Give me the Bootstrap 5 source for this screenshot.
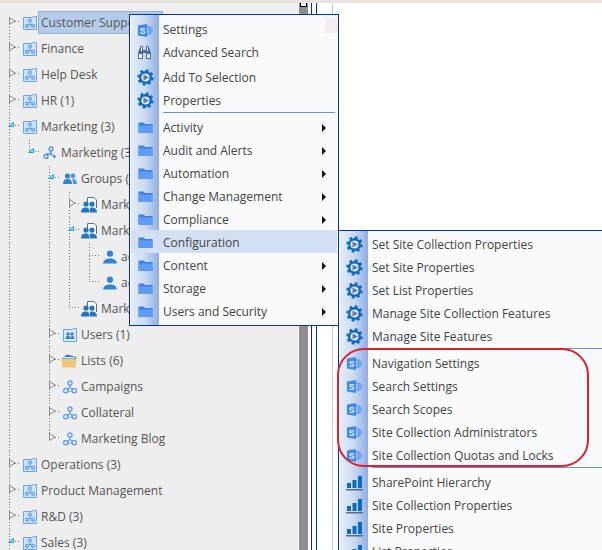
<!DOCTYPE html>
<html lang="en">
<head>
<meta charset="utf-8">
<title>Tree menu</title>
<link href="https://cdn.jsdelivr.net/npm/bootstrap@5.3.0/dist/css/bootstrap.min.css" rel="stylesheet">
<style>
html,body{height:550px;overflow:hidden;background:#fff}
body{font-family:"Open Sans","Noto Sans",sans-serif;font-size:12px;color:#555}
.topstrip{height:3px;background:#e6e2de}
.stage{height:547px;position:relative;overflow:hidden}
.treepane{width:298px;background:#eee;padding-top:7px;overflow:hidden;flex:none}
.scrollcol{width:11px;flex:none;background:#fff;padding-left:1px}
.scrollthumb{height:100%;background:#8f8f8f;width:9px}
.scrollknob{position:absolute;left:300px;top:-2px;width:7px;height:6px;background:#fff;border:1px solid #000}
.rail1{width:5px;flex:none;margin-left:2px;border-left:1px solid #003399;background:#fff}
.rail2{width:16px;flex:none;border-left:1px solid #003399;background:#fff}
.rail3{flex:1;border-left:1px solid #b7cbe8;background:#fff;margin-left:0}
.trow{height:26px;line-height:26px;white-space:nowrap}
.tg,.tc,.tl,.tb{display:block;width:20px;height:26px;flex:none;background-repeat:no-repeat}
.tg{background-image:repeating-linear-gradient(to bottom,#777 0 1px,transparent 1px 3px);background-size:1px 100%;background-position:9px 0}
.tc{background-image:repeating-linear-gradient(to bottom,#777 0 1px,transparent 1px 3px),repeating-linear-gradient(to right,#777 0 1px,transparent 1px 3px);background-size:1px 100%,11px 1px;background-position:9px 0,9px 11px}
.tl{background-image:repeating-linear-gradient(to bottom,#777 0 1px,transparent 1px 3px),repeating-linear-gradient(to right,#777 0 1px,transparent 1px 3px);background-size:1px 12px,11px 1px;background-position:9px 0,9px 11px}
.tc.tfirst{background-size:1px 15px,11px 1px;background-position:9px 11px,9px 11px}
.tc svg,.tl svg{display:block;margin-left:9px;margin-top:7px;width:7px;height:8px}
.tc svg.op,.tl svg.op{margin-left:8px;margin-top:8px;width:6px;height:5px}
.tico{width:14px;height:14px;margin-left:3px;margin-right:4px;flex:none}
.tico.wide{width:16px;height:16px;margin-left:1px}
.tsel{display:block;margin-left:-3px;width:125px;height:23px;line-height:21px;background:#b4cce9;border:1px solid #8fb0d8;padding-left:2px;margin-top:-1px}
.cmenu{position:absolute;border:1px solid #003399;padding:4px 1px 3px 1px;color:#444;background-color:#f8fafb;background-image:linear-gradient(90deg,#e4edf9 0,#c9daf3 14px,#8fade6 28px,transparent 28px);background-repeat:no-repeat;background-size:29px 100%;background-position:1px 0}
.cm1{left:129px;top:11px;width:210px}
.cm2{left:338px;top:227px;width:300px;padding-top:2px}
.mitem{height:23px;line-height:23px;white-space:nowrap}
.mitem.hot{background:#d3e0f3}
.mh22{height:22px;line-height:22px}
.mh25{height:25px;line-height:23px;padding-top:2px}
.cm1 .msep~.mitem{padding-top:2px}
.micon{width:28px;flex:none;text-align:center}
.micon svg{width:17px;height:17px;display:block}
.micon svg.bino{margin-left:5px}
.mtext{margin-left:4px;flex:1}
.marrow{width:0;height:0;border-left:4px solid #111;border-top:4px solid transparent;border-bottom:4px solid transparent;margin-right:11px}
.msep{height:1px;background:#6f94d8;margin:0 2px 2px 32px}
.cm2 .msep{margin-bottom:3px;margin-right:0}
.ghost{position:absolute;left:325px;top:15px;width:13px;height:15px;background:#f3ecf3}
.ring{position:absolute;left:337px;top:345px;width:252px;height:119px;border:2px solid #e01f2e;border-radius:27px}
</style>
</head>
<body>
<svg width="0" height="0" class="d-block" aria-hidden="true">
<defs>
<symbol id="i-site" viewBox="0 0 14 14"><path d="M.5 1.500H9L10.500 .5 13.500 .5V13.500H.5Z" fill="#cfe2fb" stroke="#69a4f2"/><circle cx="7" cy="4.500" r="1.600" fill="#a9c9f5" stroke="#5a98ea"/><circle cx="4" cy="9.800" r="1.600" fill="#a9c9f5" stroke="#5a98ea"/><circle cx="10" cy="9.800" r="1.600" fill="#a9c9f5" stroke="#5a98ea"/><path d="M7 6.500V8M5.500 8.500H8.500" stroke="#5a98ea"/></symbol>
<symbol id="i-sub" viewBox="0 0 14 14"><circle cx="8" cy="3" r="2" fill="none" stroke="#4a8fe8" stroke-width="1.300"/><path d="M8 5V8M8 8L12 11M8 8H3" stroke="#4a8fe8" stroke-width="1.300" fill="none"/><circle cx="3" cy="10.500" r="2" fill="none" stroke="#4a8fe8" stroke-width="1.300"/><path d="M10 9.500H13L11.500 13Z" fill="#2f86d6"/></symbol>
<symbol id="i-groups" viewBox="0 0 14 14"><circle cx="4.500" cy="4" r="2.600" fill="#2f86d6"/><circle cx="10" cy="4" r="2.400" fill="#4b98e4"/><path d="M0 12C0 8 2 7 4.500 7S9 8 9 12Z" fill="#2f86d6"/><path d="M9.500 7C12 7 14 8 14 12H10C10 10 10 8 9 7.500Z" fill="#4b98e4"/></symbol>
<symbol id="i-gdoc" viewBox="0 0 16 16"><path d="M6.500 5V.5H13L15.500 3V11" fill="#fff" stroke="#5a6f82"/><circle cx="5" cy="7" r="2.600" fill="#1f78c1"/><circle cx="11" cy="7" r="2.600" fill="#1f78c1"/><path d="M0 15.500C0 11.500 2 10.500 5 10.500S8 11.500 8 15.500Z" fill="#1f78c1"/><path d="M8.500 15.500C8.500 11.500 9 10.500 11 10.500S16 11.500 16 15.500Z" fill="#1f78c1"/></symbol>
<symbol id="i-user" viewBox="0 0 14 14"><circle cx="7" cy="3.700" r="3.100" fill="#2f86d6"/><path d="M0 13.500C.5 9.500 4 8.500 7 8.500S13.500 9.500 14 13.500Z" fill="#2f86d6"/></symbol>
<symbol id="i-users" viewBox="0 0 14 14"><path d="M.5 1.500H9L10.500 .5 13.500 .5V13.500H.5Z" fill="#dce9fb" stroke="#69a4f2"/><circle cx="5" cy="6" r="1.700" fill="#3a7fd4"/><circle cx="9" cy="6" r="1.700" fill="#3a7fd4"/><path d="M2.500 11C2.500 8.500 4 8 5 8S7.500 8.500 7.500 11ZM7.500 11C7.500 9 8 8 9 8S11.500 8.500 11.500 11Z" fill="#3a7fd4"/></symbol>
<symbol id="i-lists" viewBox="0 0 16 16"><path d="M1 5.500 6 1.500 15 4V6H1Z" fill="#2a7fc5"/><path d="M2 4H14V5.500H2Z" fill="#d6eafb"/><path d="M.5 6H15.500L14.500 14.500H1.500Z" fill="#f3c778"/></symbol>
<symbol id="i-hier" viewBox="0 0 14 14"><circle cx="7" cy="3" r="2.100" fill="#e2edfc" stroke="#5a98ea" stroke-width="1.200"/><rect x=".7" y="8.700" width="4" height="4" rx="1" fill="#e2edfc" stroke="#5a98ea" stroke-width="1.200"/><rect x="9.300" y="8.700" width="4" height="4" rx="1" fill="#e2edfc" stroke="#5a98ea" stroke-width="1.200"/><rect x="5.300" y="8" width="3.400" height="3.400" rx="1" fill="#e2edfc" stroke="#5a98ea"/><path d="M7 5V8" stroke="#5a98ea" stroke-width="1.200"/></symbol>
<symbol id="i-sp" viewBox="0 0 17 17"><circle cx="11" cy="8.500" r="3.800" fill="none" stroke="#6ea6f4" stroke-width="2"/><path d="M11 4.700 16 8.500 11 12.300Z" fill="#6ea6f4"/><path d="M1 3.500 10 2V15L1 13.500Z" fill="#3f88ee"/><text x="5.500" y="11.500" text-anchor="middle" font-family="Liberation Sans,sans-serif" font-size="8.500" font-weight="700" fill="#eaf2fe">S</text></symbol>
<symbol id="i-gear" viewBox="0 0 17 17"><circle cx="8.500" cy="8.500" r="7" fill="none" stroke="#0b6cbf" stroke-width="2.400" stroke-dasharray="2.750 2.750"/><circle cx="8.500" cy="8.500" r="5.300" fill="#dfe8f1" stroke="#0b6cbf" stroke-width="2.400"/><path d="M6.500 5.500 12 8.500 6.500 11.500Z" fill="#6d7d8a"/></symbol>
<symbol id="i-bino" viewBox="0 0 17 17"><path d="M4.500 2H7V6H10V2H12.500L15 9V15H10V9H7V15H2V9Z" fill="#4d6a9c"/><path d="M3 10H6V14H3ZM11 10H14V14H11ZM5 3H6V7H5ZM11 3H12V7H11Z" fill="#eef2fa"/></symbol>
<symbol id="i-folder" viewBox="0 0 17 17"><path d="M1.500 5V3.500H7L8 5H15.500V14H1.500Z" fill="#3f82e2"/><path d="M1.500 6.500H15.500V14H1.500Z" fill="#5d9df6"/></symbol>
<symbol id="i-bars" viewBox="0 0 17 17"><path d="M1 9H5V14H1ZM6.500 6H10.500V14H6.500ZM12 2H16V14H12Z" fill="#0b6cbf"/><path d="M0 15H17V16.500H0Z" fill="#5f6b74"/></symbol>
<symbol id="t-closed" viewBox="0 0 7 8"><path d="M.5.500 6 4 .5 7.500Z" fill="#eee" stroke="#888"/></symbol>
<symbol id="t-open" viewBox="0 0 6 5"><path d="M5.500 .5V4.500H.5Z" fill="#9fdcf5" stroke="#12a5e0"/></symbol>
</defs>
</svg>

<div class="topstrip"></div>
<div class="stage d-flex">
  <div class="treepane">
    <div class="trow d-flex align-items-center"><i class="tc tfirst"><svg><use href="#t-closed"/></svg></i><svg class="tico"><use href="#i-site"/></svg><span class="tsel">Customer Support (3)</span></div>
    <div class="trow d-flex align-items-center"><i class="tc"><svg><use href="#t-closed"/></svg></i><svg class="tico"><use href="#i-site"/></svg><span>Finance</span></div>
    <div class="trow d-flex align-items-center"><i class="tc"><svg><use href="#t-closed"/></svg></i><svg class="tico"><use href="#i-site"/></svg><span>Help Desk</span></div>
    <div class="trow d-flex align-items-center"><i class="tc"><svg><use href="#t-closed"/></svg></i><svg class="tico"><use href="#i-site"/></svg><span>HR (1)</span></div>
    <div class="trow d-flex align-items-center"><i class="tc"><svg class="op"><use href="#t-open"/></svg></i><svg class="tico"><use href="#i-site"/></svg><span>Marketing (3)</span></div>
    <div class="trow d-flex align-items-center"><i class="tg"></i><i class="tl"><svg class="op"><use href="#t-open"/></svg></i><svg class="tico"><use href="#i-sub"/></svg><span>Marketing (3)</span></div>
    <div class="trow d-flex align-items-center"><i class="tg"></i><i class="tb"></i><i class="tc"><svg class="op"><use href="#t-open"/></svg></i><svg class="tico"><use href="#i-groups"/></svg><span>Groups (3)</span></div>
    <div class="trow d-flex align-items-center"><i class="tg"></i><i class="tb"></i><i class="tg"></i><i class="tc"><svg><use href="#t-closed"/></svg></i><svg class="tico wide"><use href="#i-gdoc"/></svg><span>Marketing Members</span></div>
    <div class="trow d-flex align-items-center"><i class="tg"></i><i class="tb"></i><i class="tg"></i><i class="tc"><svg class="op"><use href="#t-open"/></svg></i><svg class="tico wide"><use href="#i-gdoc"/></svg><span>Marketing Owners</span></div>
    <div class="trow d-flex align-items-center"><i class="tg"></i><i class="tb"></i><i class="tg"></i><i class="tg"></i><i class="tc"></i><svg class="tico"><use href="#i-user"/></svg><span>admin</span></div>
    <div class="trow d-flex align-items-center"><i class="tg"></i><i class="tb"></i><i class="tg"></i><i class="tg"></i><i class="tl"></i><svg class="tico"><use href="#i-user"/></svg><span>admin</span></div>
    <div class="trow d-flex align-items-center"><i class="tg"></i><i class="tb"></i><i class="tg"></i><i class="tl"></i><svg class="tico wide"><use href="#i-gdoc"/></svg><span>Marketing Visitors</span></div>
    <div class="trow d-flex align-items-center"><i class="tg"></i><i class="tb"></i><i class="tc"><svg><use href="#t-closed"/></svg></i><svg class="tico"><use href="#i-users"/></svg><span>Users (1)</span></div>
    <div class="trow d-flex align-items-center"><i class="tg"></i><i class="tb"></i><i class="tc"><svg><use href="#t-closed"/></svg></i><svg class="tico wide"><use href="#i-lists"/></svg><span>Lists (6)</span></div>
    <div class="trow d-flex align-items-center"><i class="tg"></i><i class="tb"></i><i class="tc"><svg><use href="#t-closed"/></svg></i><svg class="tico"><use href="#i-hier"/></svg><span>Campaigns</span></div>
    <div class="trow d-flex align-items-center"><i class="tg"></i><i class="tb"></i><i class="tc"><svg><use href="#t-closed"/></svg></i><svg class="tico"><use href="#i-hier"/></svg><span>Collateral</span></div>
    <div class="trow d-flex align-items-center"><i class="tg"></i><i class="tb"></i><i class="tl"><svg><use href="#t-closed"/></svg></i><svg class="tico"><use href="#i-hier"/></svg><span>Marketing Blog</span></div>
    <div class="trow d-flex align-items-center"><i class="tc"><svg><use href="#t-closed"/></svg></i><svg class="tico"><use href="#i-site"/></svg><span>Operations (3)</span></div>
    <div class="trow d-flex align-items-center"><i class="tc"><svg><use href="#t-closed"/></svg></i><svg class="tico"><use href="#i-site"/></svg><span>Product Management</span></div>
    <div class="trow d-flex align-items-center"><i class="tc"><svg><use href="#t-closed"/></svg></i><svg class="tico"><use href="#i-site"/></svg><span>R&amp;D (3)</span></div>
    <div class="trow d-flex align-items-center"><i class="tc"><svg class="op"><use href="#t-open"/></svg></i><svg class="tico"><use href="#i-site"/></svg><span>Sales (3)</span></div>
  </div>
  <div class="scrollcol"><div class="scrollthumb"></div></div>
  <div class="rail1"></div>
  <div class="rail2"></div>
  <div class="rail3"></div>

  <div class="scrollknob"></div>

  <div class="cmenu cm1">
    <div class="mitem mh22 d-flex align-items-center"><span class="micon d-flex justify-content-center"><svg><use href="#i-sp"/></svg></span><span class="mtext">Settings</span></div>
    <div class="mitem d-flex align-items-center"><span class="micon d-flex"><svg class="bino"><use href="#i-bino"/></svg></span><span class="mtext">Advanced Search</span></div>
    <div class="mitem mh25 d-flex align-items-center"><span class="micon d-flex justify-content-center"><svg><use href="#i-gear"/></svg></span><span class="mtext">Add To Selection</span></div>
    <div class="mitem d-flex align-items-center"><span class="micon d-flex justify-content-center"><svg><use href="#i-gear"/></svg></span><span class="mtext">Properties</span></div>
    <div class="msep"></div>
    <div class="mitem d-flex align-items-center"><span class="micon d-flex justify-content-center"><svg><use href="#i-folder"/></svg></span><span class="mtext">Activity</span><span class="marrow"></span></div>
    <div class="mitem d-flex align-items-center"><span class="micon d-flex justify-content-center"><svg><use href="#i-folder"/></svg></span><span class="mtext">Audit and Alerts</span><span class="marrow"></span></div>
    <div class="mitem d-flex align-items-center"><span class="micon d-flex justify-content-center"><svg><use href="#i-folder"/></svg></span><span class="mtext">Automation</span><span class="marrow"></span></div>
    <div class="mitem d-flex align-items-center"><span class="micon d-flex justify-content-center"><svg><use href="#i-folder"/></svg></span><span class="mtext">Change Management</span><span class="marrow"></span></div>
    <div class="mitem d-flex align-items-center"><span class="micon d-flex justify-content-center"><svg><use href="#i-folder"/></svg></span><span class="mtext">Compliance</span><span class="marrow"></span></div>
    <div class="mitem hot d-flex align-items-center"><span class="micon d-flex justify-content-center"><svg><use href="#i-folder"/></svg></span><span class="mtext">Configuration</span></div>
    <div class="mitem d-flex align-items-center"><span class="micon d-flex justify-content-center"><svg><use href="#i-folder"/></svg></span><span class="mtext">Content</span><span class="marrow"></span></div>
    <div class="mitem d-flex align-items-center"><span class="micon d-flex justify-content-center"><svg><use href="#i-folder"/></svg></span><span class="mtext">Storage</span><span class="marrow"></span></div>
    <div class="mitem d-flex align-items-center"><span class="micon d-flex justify-content-center"><svg><use href="#i-folder"/></svg></span><span class="mtext">Users and Security</span><span class="marrow"></span></div>
  </div>
  <div class="ghost"></div>

  <div class="cmenu cm2">
    <div class="mitem d-flex align-items-center"><span class="micon d-flex justify-content-center"><svg><use href="#i-gear"/></svg></span><span class="mtext">Set Site Collection Properties</span></div>
    <div class="mitem d-flex align-items-center"><span class="micon d-flex justify-content-center"><svg><use href="#i-gear"/></svg></span><span class="mtext">Set Site Properties</span></div>
    <div class="mitem d-flex align-items-center"><span class="micon d-flex justify-content-center"><svg><use href="#i-gear"/></svg></span><span class="mtext">Set List Properties</span></div>
    <div class="mitem d-flex align-items-center"><span class="micon d-flex justify-content-center"><svg><use href="#i-gear"/></svg></span><span class="mtext">Manage Site Collection Features</span></div>
    <div class="mitem d-flex align-items-center"><span class="micon d-flex justify-content-center"><svg><use href="#i-gear"/></svg></span><span class="mtext">Manage Site Features</span></div>
    <div class="msep"></div>
    <div class="mitem d-flex align-items-center"><span class="micon d-flex justify-content-center"><svg><use href="#i-sp"/></svg></span><span class="mtext">Navigation Settings</span></div>
    <div class="mitem d-flex align-items-center"><span class="micon d-flex justify-content-center"><svg><use href="#i-sp"/></svg></span><span class="mtext">Search Settings</span></div>
    <div class="mitem d-flex align-items-center"><span class="micon d-flex justify-content-center"><svg><use href="#i-sp"/></svg></span><span class="mtext">Search Scopes</span></div>
    <div class="mitem d-flex align-items-center"><span class="micon d-flex justify-content-center"><svg><use href="#i-sp"/></svg></span><span class="mtext">Site Collection Administrators</span></div>
    <div class="mitem d-flex align-items-center"><span class="micon d-flex justify-content-center"><svg><use href="#i-sp"/></svg></span><span class="mtext">Site Collection Quotas and Locks</span></div>
    <div class="msep"></div>
    <div class="mitem d-flex align-items-center"><span class="micon d-flex justify-content-center"><svg><use href="#i-bars"/></svg></span><span class="mtext">SharePoint Hierarchy</span></div>
    <div class="mitem d-flex align-items-center"><span class="micon d-flex justify-content-center"><svg><use href="#i-bars"/></svg></span><span class="mtext">Site Collection Properties</span></div>
    <div class="mitem d-flex align-items-center"><span class="micon d-flex justify-content-center"><svg><use href="#i-bars"/></svg></span><span class="mtext">Site Properties</span></div>
    <div class="mitem d-flex align-items-center"><span class="micon d-flex justify-content-center"><svg><use href="#i-bars"/></svg></span><span class="mtext">List Properties</span></div>
  </div>
  <div class="ring"></div>
</div>
<script src="https://cdn.jsdelivr.net/npm/bootstrap@5.3.0/dist/js/bootstrap.bundle.min.js"></script>
</body>
</html>
